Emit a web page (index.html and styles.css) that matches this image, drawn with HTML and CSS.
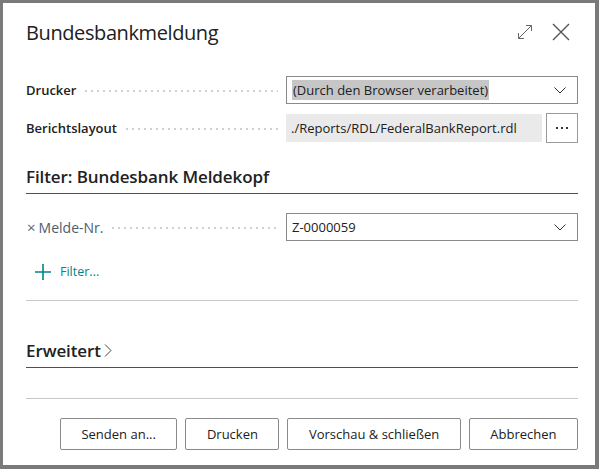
FILE: index.html
```html
<!DOCTYPE html>
<html lang="de">
<head>
    <meta charset="UTF-8">
    <title>Bundesbankmeldung</title>
    <link rel="stylesheet" href="styles.css">
</head>
<body>

    <div class="dialog">
        <header class="dialog-header">
            <h1>Bundesbankmeldung</h1>
            <div class="header-icons">
                <svg class="icon-expand" width="16" height="16" viewBox="0 0 16 16">
                    <path d="M1.5 14.5 L14.5 1.5 M9 1.5 H14.5 V7 M1.5 9 V14.5 H7" fill="none" stroke="#666" stroke-width="1"/>
                </svg>
                <svg class="icon-close" width="18" height="18" viewBox="0 0 18 18">
                    <path d="M1 1 L17 17 M17 1 L1 17" fill="none" stroke="#555" stroke-width="1.4"/>
                </svg>
            </div>
        </header>

        <div class="field-row">
            <span class="label">Drucker</span>
            <span class="leader"></span>
            <div class="input select">
                <span class="selected-text">(Durch den Browser verarbeitet)</span>
                <svg class="chevron" width="12" height="7" viewBox="0 0 12 7">
                    <path d="M0.5 0.5 L6 6 L11.5 0.5" fill="none" stroke="#333" stroke-width="1"/>
                </svg>
            </div>
        </div>

        <div class="field-row">
            <span class="label">Berichtslayout</span>
            <span class="leader"></span>
            <div class="input readonly">./Reports/RDL/FederalBankReport.rdl</div>
            <button class="more-btn">
                <span></span><span></span><span></span>
            </button>
        </div>

        <h2 class="section-title">Filter: Bundesbank Meldekopf</h2>

        <div class="field-row filter-row">
            <span class="label filter-label"><span class="remove-x">&times;</span>Melde-Nr.</span>
            <span class="leader"></span>
            <div class="input select">
                <span>Z-0000059</span>
                <svg class="chevron" width="12" height="7" viewBox="0 0 12 7">
                    <path d="M0.5 0.5 L6 6 L11.5 0.5" fill="none" stroke="#333" stroke-width="1"/>
                </svg>
            </div>
        </div>

        <div class="add-filter">
            <svg width="16" height="16" viewBox="0 0 16 16">
                <path d="M8 0 V16 M0 8 H16" stroke="#00858a" stroke-width="1.6"/>
            </svg>
            <span>Filter...</span>
        </div>

        <hr class="light-line">

        <h2 class="section-title advanced">Erweitert<svg width="8" height="13" viewBox="0 0 8 13"><path d="M1 0.5 L7 6.5 L1 12.5" fill="none" stroke="#444" stroke-width="1"/></svg></h2>

        <hr class="light-line bottom-line">

        <div class="actions">
            <button class="action-btn">Senden an...</button>
            <button class="action-btn">Drucken</button>
            <button class="action-btn">Vorschau &amp; schließen</button>
            <button class="action-btn">Abbrechen</button>
        </div>
    </div>

</body>
</html>
```

FILE: styles.css
```css
/* General Styles */
body {
    margin: 0;
    padding: 3px 4px 4px 3px;
    background-color: #7a7a7a;
    font-family: "Open Sans", "Noto Sans", Arial, sans-serif;
    color: #212121;
}

.dialog {
    background-color: white;
    height: 462px;
    padding: 0 17px 0 23px;
    box-sizing: border-box;
}

/* Header */
.dialog-header {
    display: flex;
    align-items: center;
    justify-content: space-between;
    height: 58px;
}

h1 {
    margin: 0;
    font-size: 20px;
    font-weight: 500;
    letter-spacing: -0.4px;
}

.header-icons {
    display: flex;
    align-items: center;
    gap: 19px;
    margin-right: 8px;
}

/* Field rows */
.field-row {
    display: flex;
    align-items: center;
    height: 28px;
    margin-top: 15px;
}

.field-row + .field-row {
    margin-top: 10px;
}

.label {
    font-size: 13px;
    font-weight: 600;
    white-space: nowrap;
}

.leader {
    flex: 1;
    height: 2px;
    margin: 2px 8px 0 7px;
    background-image: radial-gradient(circle, #d0d0d0 0.8px, transparent 1px);
    background-size: 6px 2px;
}

.input {
    width: 292px;
    height: 28px;
    box-sizing: border-box;
    display: flex;
    align-items: center;
    padding: 0 5px;
    font-size: 13px;
}

.select {
    border: 1px solid #8a8a8a;
    justify-content: space-between;
    padding-right: 11px;
}

.selected-text {
    background-color: #c6c6c6;
    padding: 1px 1px;
}

.readonly {
    width: 256px;
    background-color: #eaeaea;
}

.more-btn {
    width: 32px;
    height: 30px;
    margin-left: 4px;
    border: 1px solid #9a9a9a;
    background-color: white;
    display: flex;
    align-items: center;
    justify-content: center;
    gap: 3px;
    padding: 0;
}

.more-btn span {
    width: 2px;
    height: 2px;
    background-color: #333;
}

/* Sections */
.section-title {
    margin: 23px 0 0;
    padding-bottom: 5px;
    border-bottom: 1px solid #505050;
    font-size: 17px;
    font-weight: 600;
    letter-spacing: -0.1px;
}

.filter-row {
    margin-top: 19px;
}

.filter-label {
    font-size: 14px;
    font-weight: 400;
    color: #505c6d;
}

.remove-x {
    font-size: 15px;
    margin: 0 3px 0 1px;
    color: #666;
}

.add-filter {
    display: flex;
    align-items: center;
    gap: 9px;
    margin: 22px 0 0 9px;
    color: #00858a;
    font-size: 12.5px;
}

.light-line {
    border: none;
    border-top: 1px solid #c8c8c8;
    margin: 20px 0 0;
}

.advanced {
    margin-top: 38px;
    display: flex;
    align-items: center;
    gap: 3px;
}

.bottom-line {
    margin-top: 30px;
}

/* Buttons */
.actions {
    display: flex;
    justify-content: flex-end;
    gap: 8px;
    margin-top: 19px;
}

.action-btn {
    height: 32px;
    padding: 0 20.5px;
    font-family: inherit;
    font-size: 13px;
    color: #212121;
    background-color: white;
    border: 1px solid #8a8a8a;
    border-radius: 2px;
}
```
